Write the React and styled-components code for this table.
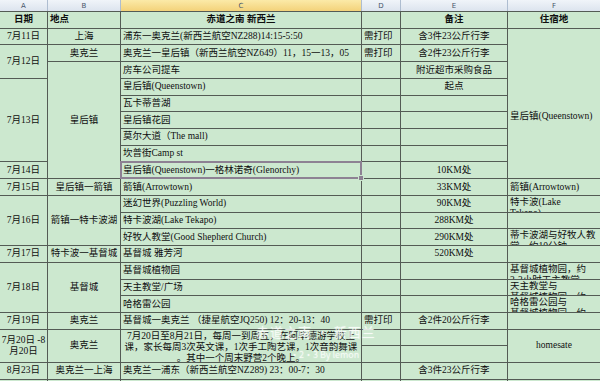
import React from "react";
import styled, { createGlobalStyle } from "styled-components";

// Column widths (gridlines are the 1px gaps between them)
const COLS = "47px 72px 240px 38px 106px 92px";

const GlobalStyle = createGlobalStyle`
  html, body {
    margin: 0;
    padding: 0;
    background: #cce8cf;
  }
  body {
    font-family: "Liberation Serif", "Noto Sans CJK SC", serif;
    overflow: hidden;
  }
`;

const Sheet = styled.div`
  position: relative;
  width: 600px;
  height: 381px;
  overflow: hidden;
  background: #cce8cf;
`;

const ColumnBar = styled.div`
  display: grid;
  grid-template-columns: ${COLS};
  column-gap: 1px;
  height: 11px;
  background: #aebdd0;
`;

const ColumnLetter = styled.div`
  display: flex;
  align-items: center;
  justify-content: center;
  font-family: "DejaVu Sans", sans-serif;
  font-size: 7px;
  color: #45546a;
  background: ${(p) =>
    p.$active
      ? "linear-gradient(#fbeaa8, #f3d27a)"
      : "linear-gradient(#f0f4f9, #dce4ee)"};
`;

const Grid = styled.div`
  display: grid;
  grid-template-columns: ${COLS};
  grid-template-rows: repeat(22, 15.73px) 30px;
  gap: 1px;
  padding-top: 1px;
  background: #545b55;
`;

const Cell = styled.div`
  position: relative;
  grid-column: ${(p) => p.$col};
  grid-row: ${(p) => p.$row} / span ${(p) => p.$rs || 1};
  display: flex;
  flex-direction: column;
  align-items: ${(p) =>
    p.$align === "left" ? "flex-start" : "center"};
  justify-content: ${(p) => (p.$wrap ? "flex-start" : "center")};
  padding: ${(p) => (p.$wrap ? "1px 2px 0" : "0 2px")};
  padding-top: ${(p) => p.$shift || undefined};
  background: #cce8cf;
  color: #0f0f0f;
  font-size: 9.5px;
  line-height: 11px;
  font-weight: ${(p) => (p.$bold ? 700 : 400)};
  text-align: ${(p) => (p.$align === "left" ? "left" : "center")};
  white-space: nowrap;
  overflow: ${(p) => (p.$selected ? "visible" : "hidden")};
  outline: ${(p) => (p.$selected ? "2px solid #8d8193" : "none")};
  outline-offset: -1px;
  z-index: ${(p) => (p.$selected ? 2 : "auto")};
`;

const Line = styled.span`
  display: block;
`;

const FillHandle = styled.span`
  position: absolute;
  right: -3px;
  bottom: -3px;
  width: 4px;
  height: 4px;
  background: #8d8193;
  border: 1px solid #cce8cf;
`;

const Watermark = styled.div`
  position: absolute;
  left: ${(p) => p.$x}px;
  top: ${(p) => p.$y}px;
  font-family: "Noto Sans CJK SC", sans-serif;
  font-size: ${(p) => p.$size}px;
  color: rgba(255, 255, 255, 0.78);
  letter-spacing: ${(p) => p.$spacing || 0}px;
  text-shadow: 0 0 2px rgba(255, 255, 255, 0.5);
  white-space: nowrap;
  pointer-events: none;
`;

const cells = [
  // A
  { col: 1, row: 1, text: "日期", bold: true },
  { col: 1, row: 2, text: "7月11日" },
  { col: 1, row: 3, rs: 2, text: "7月12日" },
  { col: 1, row: 5, rs: 5, text: "7月13日" },
  { col: 1, row: 10, text: "7月14日" },
  { col: 1, row: 11, text: "7月15日" },
  { col: 1, row: 12, rs: 3, text: "7月16日" },
  { col: 1, row: 15, text: "7月17日" },
  { col: 1, row: 16, rs: 3, text: "7月18日" },
  { col: 1, row: 19, text: "7月19日" },
  { col: 1, row: 20, rs: 2, lines: ["7月20日 -8", "月20日"] },
  { col: 1, row: 22, text: "8月23日" },
  { col: 1, row: 23 },
  // B
  { col: 2, row: 1, text: "地点", bold: true, align: "left" },
  { col: 2, row: 2, text: "上海" },
  { col: 2, row: 3, text: "奥克兰" },
  { col: 2, row: 4, rs: 7, text: "皇后镇" },
  { col: 2, row: 11, text: "皇后镇一箭镇" },
  { col: 2, row: 12, rs: 3, text: "箭镇一特卡波湖" },
  { col: 2, row: 15, text: "特卡波一基督城" },
  { col: 2, row: 16, rs: 3, text: "基督城" },
  { col: 2, row: 19, text: "奥克兰" },
  { col: 2, row: 20, rs: 2, text: "奥克兰" },
  { col: 2, row: 22, text: "奥克兰一上海" },
  { col: 2, row: 23 },
  // C
  { col: 3, row: 1, text: "赤道之南 新西兰", bold: true },
  { col: 3, row: 2, align: "left", text: "浦东一奥克兰(新西兰航空NZ288)14:15-5:50" },
  { col: 3, row: 3, align: "left", text: "奥克兰一皇后镇（新西兰航空NZ649）11，15一13，05" },
  { col: 3, row: 4, align: "left", text: "房车公司提车" },
  { col: 3, row: 5, align: "left", text: "皇后镇(Queenstown)" },
  { col: 3, row: 6, align: "left", text: "瓦卡蒂普湖" },
  { col: 3, row: 7, align: "left", text: "皇后镇花园" },
  { col: 3, row: 8, align: "left", text: "莫尔大道（The mall)" },
  { col: 3, row: 9, align: "left", text: "坎普街Camp st" },
  { col: 3, row: 10, align: "left", selected: true, text: "皇后镇(Queenstown)一格林诺奇(Glenorchy)" },
  { col: 3, row: 11, align: "left", text: "箭镇(Arrowtown)" },
  { col: 3, row: 12, align: "left", text: "迷幻世界(Puzzling World)" },
  { col: 3, row: 13, align: "left", text: "特卡波湖(Lake Tekapo)" },
  { col: 3, row: 14, align: "left", text: "好牧人教堂(Good Shepherd Church)" },
  { col: 3, row: 15, align: "left", text: "基督城 雅芳河" },
  { col: 3, row: 16, align: "left", text: "基督城植物园" },
  { col: 3, row: 17, align: "left", text: "天主教堂/广场" },
  { col: 3, row: 18, align: "left", text: "哈格雷公园" },
  { col: 3, row: 19, align: "left", text: "基督城一奥克兰 （捷星航空JQ250) 12：20-13：40" },
  {
    col: 3,
    row: 20,
    rs: 2,
    wrap: true,
    lines: [
      "7月20日至8月21日，每周一到周五，在阿毕德游学校上",
      "课，家长每周3次英文课，1次手工陶艺课，1次音韵舞课",
      "。其中一个周末野营2个晚上。",
    ],
  },
  { col: 3, row: 22, align: "left", text: "奥克兰一浦东（新西兰航空NZ289) 23：00-7：30" },
  { col: 3, row: 23 },
  // F
  { col: 6, row: 1, text: "住宿地", bold: true },
  { col: 6, row: 2, rs: 9, align: "left", shift: "26px", text: "皇后镇(Queenstown)" },
  { col: 6, row: 11, align: "left", text: "箭镇(Arrowtown)" },
  { col: 6, row: 12, align: "left", wrap: true, lines: ["特卡波(Lake", "Tekapo)"] },
  { col: 6, row: 13 },
  { col: 6, row: 14, align: "left", wrap: true, lines: ["蒂卡波湖与好牧人教", "堂，约10分钟"] },
  { col: 6, row: 15 },
  { col: 6, row: 16, align: "left", wrap: true, lines: ["基督城植物园，约", "2-3小时天主教堂"] },
  { col: 6, row: 17, align: "left", wrap: true, lines: ["天主教堂与", "基督城植物园，约"] },
  { col: 6, row: 18, align: "left", wrap: true, lines: ["哈格雷公园与", "基督城植物园，约"] },
  { col: 6, row: 19 },
  { col: 6, row: 20, rs: 2, text: "homesate" },
  { col: 6, row: 22 },
  { col: 6, row: 23 },
];

// D: one cell per row
const notesD = { 2: "需打印", 3: "需打印", 19: "需打印" };
// E: one cell per row
const notesE = {
  1: "备注",
  2: "含3件23公斤行李",
  3: "含2件23公斤行李",
  4: "附近超市采购食品",
  5: "起点",
  10: "10KM处",
  11: "33KM处",
  12: "90KM处",
  13: "288KM处",
  14: "290KM处",
  15: "520KM处",
  19: "含2件20公斤行李",
  22: "含3件23公斤行李",
};

for (let r = 1; r <= 23; r++) {
  cells.push({ col: 4, row: r, align: "left", text: notesD[r] });
  cells.push({ col: 5, row: r, bold: r === 1, text: notesE[r] });
}

const letters = ["A", "B", "C", "D", "E", "F"];

export default function App() {
  return (
    <>
      <GlobalStyle />
      <Sheet>
        <ColumnBar>
          {letters.map((l) => (
            <ColumnLetter key={l} $active={l === "C"}>
              {l}
            </ColumnLetter>
          ))}
        </ColumnBar>
        <Grid>
          {cells.map((c) => (
            <Cell
              key={`${c.col}-${c.row}`}
              $col={c.col}
              $row={c.row}
              $rs={c.rs}
              $align={c.align}
              $bold={c.bold}
              $wrap={c.wrap}
              $shift={c.shift}
              $selected={c.selected}
            >
              {c.lines
                ? c.lines.map((t) => <Line key={t}>{t}</Line>)
                : c.text}
              {c.selected && <FillHandle />}
            </Cell>
          ))}
        </Grid>
        <Watermark $x={256} $y={322} $size={13} $spacing={1}>
          赤道之南 · 新西兰
        </Watermark>
        <Watermark $x={290} $y={348} $size={9}>
          ·2·3 By lemon
        </Watermark>
      </Sheet>
    </>
  );
}
